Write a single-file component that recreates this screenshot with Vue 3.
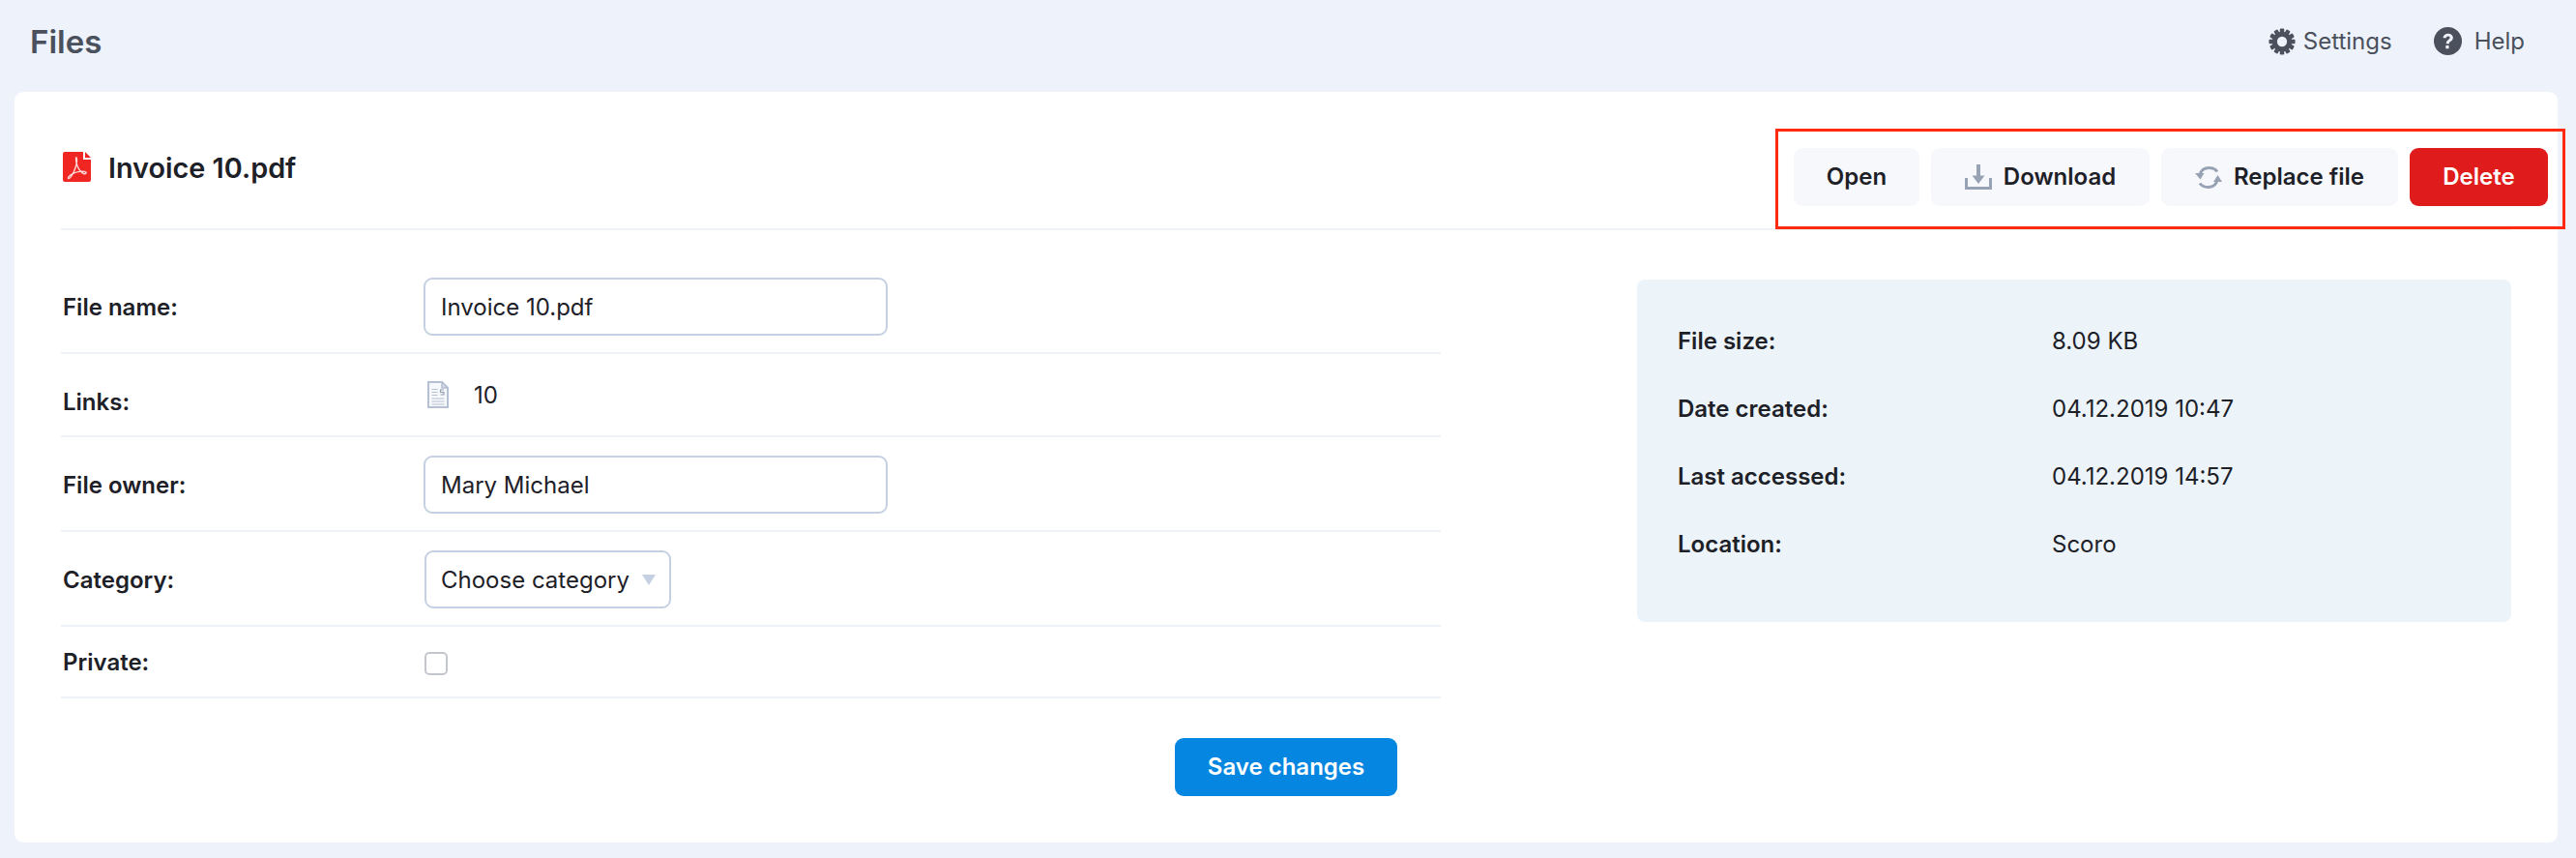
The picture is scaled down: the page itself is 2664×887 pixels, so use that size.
<script setup>
const details = [
  { label: 'File size:', value: '8.09 KB' },
  { label: 'Date created:', value: '04.12.2019 10:47' },
  { label: 'Last accessed:', value: '04.12.2019 14:57' },
  { label: 'Location:', value: 'Scoro' },
]
</script>

<template>
  <div class="page">
    <header class="topbar">
      <h1 class="page-title">Files</h1>
      <nav class="top-links">
        <a class="top-link settings">
          <svg width="28" height="28" viewBox="0 0 30 30"><g fill="#4a505c"><circle cx="15" cy="15" r="11"/><rect x="12.6" y="0.500" width="4.800" height="29" rx="1"/><rect x="12.6" y="0.500" width="4.800" height="29" rx="1" transform="rotate(30 15 15)"/><rect x="12.6" y="0.500" width="4.800" height="29" rx="1" transform="rotate(60 15 15)"/><rect x="12.6" y="0.500" width="4.800" height="29" rx="1" transform="rotate(90 15 15)"/><rect x="12.6" y="0.500" width="4.800" height="29" rx="1" transform="rotate(120 15 15)"/><rect x="12.6" y="0.500" width="4.800" height="29" rx="1" transform="rotate(150 15 15)"/></g><circle cx="15" cy="15" r="5.500" fill="#eef3fb"/></svg>
          Settings
        </a>
        <a class="top-link help">
          <svg width="29" height="29" viewBox="0 0 30 30"><circle cx="15" cy="15" r="15" fill="#4a505c"/><path d="M9.800 11.600c.3-3 2.500-4.700 5.400-4.700 3.100 0 5.300 1.700 5.300 4.400 0 2-1.100 3-2.500 4-1.200.8-1.600 1.300-1.600 2.600h-3.200c0-2.400.8-3.300 2.200-4.300 1.100-.8 1.800-1.300 1.800-2.200 0-1.100-.8-1.700-2-1.700-1.200 0-2 .8-2.100 2z" fill="#eef3fb"/><rect x="12.700" y="19.600" width="3.400" height="3.400" rx=".6" fill="#eef3fb"/></svg>
          Help
        </a>
      </nav>
    </header>

    <main class="card">
      <div class="card-head">
        <div class="file-title">
          <svg class="pdf" width="29" height="31" viewBox="0 0 29 31">
            <path d="M2 0h19v8h8v21a2 2 0 0 1-2 2H2a2 2 0 0 1-2-2V2a2 2 0 0 1 2-2z" fill="#f02622"/>
            <path d="M23 0l6 6h-6z" fill="#f02622"/>
            <path d="M14.500 6c-1.700.3-.8 5 .7 9 1.500 3.500 3.500 6.500 6.500 7.500 2.500.7 3.500-1.300 1-2-3.800-.8-10 .5-13.500 2.500-2.500 1.500-4.500 4-3.500 4.500 1.500.5 3.800-3.200 5.500-6.800 1.500-3.200 3.500-9 3.300-13-.1-1.500-.6-2-1.500-1.700z" fill="none" stroke="#fbd9d7" stroke-width="1.400"/>
          </svg>
          <span>Invoice 10.pdf</span>
        </div>
        <div class="actions">
          <button class="btn w-open">Open</button>
          <button class="btn w-download">
            <svg width="28" height="26" viewBox="0 0 28 26"><path d="M14 0v13" stroke="#98a2b5" stroke-width="4" fill="none"/><path d="M7.500 11.500h13L14 20z" fill="#98a2b5"/><path d="M1.500 14v10.500h25V14" stroke="#98a2b5" stroke-width="3" fill="none"/></svg>
            Download
          </button>
          <button class="btn w-replace">
            <svg width="28" height="23" viewBox="0 0 28 23"><path d="M23 5.500C21 2.700 18 1.500 14.500 1.500 9.500 1.500 6 4.500 5 9" fill="none" stroke="#98a2b5" stroke-width="3"/><path d="M0 7h9.500L5.500 13.500z" fill="#98a2b5"/><path d="M5 17.500c2 2.800 5 4 8.500 4 5 0 8.500-3 9.500-7.500" fill="none" stroke="#98a2b5" stroke-width="3"/><path d="M28 16h-9l4.500-7z" fill="#98a2b5"/></svg>
            Replace file
          </button>
          <button class="btn danger w-delete">Delete</button>
        </div>
      </div>

      <div class="content">
        <form class="form" @submit.prevent>
          <div class="row row-name">
            <label class="label">File name:</label>
            <input class="input" value="Invoice 10.pdf" />
          </div>
          <div class="row row-links">
            <label class="label label-low">Links:</label>
            <div class="links">
              <svg width="22" height="28" viewBox="0 0 22 28">
                <path d="M1 1h14l6 6v20H1z" fill="#f6f8fb" stroke="#b6c0d3" stroke-width="2"/>
                <path d="M15 1v6h6z" fill="#d5dbe7" stroke="#b6c0d3" stroke-width="1.500"/>
                <path d="M4.500 8.500h6M4.500 11.500h6M4.500 14.500h6M4.500 18h13M4.500 21h13M4.500 24h13" stroke="#b6c0d3" stroke-width="1.200"/>
                <path d="M17 9h-3.500v2.500H17V14h-3.500" stroke="#8f9bb0" stroke-width="1.100" fill="none"/>
              </svg>
              <span>10</span>
            </div>
          </div>
          <div class="row row-field">
            <label class="label">File owner:</label>
            <input class="input" value="Mary Michael" />
          </div>
          <div class="row row-field">
            <label class="label">Category:</label>
            <div class="select">
              <span>Choose category</span>
              <i class="caret"></i>
            </div>
          </div>
          <div class="row row-private">
            <label class="label">Private:</label>
            <span class="check"></span>
          </div>
          <div class="form-foot">
            <button class="btn primary" type="button">Save changes</button>
          </div>
        </form>

        <aside class="panel">
          <div v-for="d in details" :key="d.label" class="panel-row">
            <span class="label">{{ d.label }}</span>
            <span>{{ d.value }}</span>
          </div>
        </aside>
      </div>

      <div class="highlight"></div>
    </main>
  </div>
</template>

<style>
html, body { margin: 0; background: #eef3fb; }
</style>

<style scoped>
.page {
  width: 2664px;
  height: 887px;
  box-sizing: border-box;
  padding: 0 19px 16px 15px;
  font-family: Inter, "Liberation Sans", sans-serif;
  font-size: 24px;
  color: #1d2027;
  background: #eef3fb;
  display: flex;
  flex-direction: column;
}
.topbar {
  height: 95px;
  box-sizing: border-box;
  flex: none;
  display: flex;
  align-items: center;
  justify-content: space-between;
  padding: 0 34px 10px 16px;
  color: #4a505c;
}
.page-title { margin: 0; font-size: 33px; font-weight: 600; line-height: 40px; }
.top-links { display: flex; gap: 43px; }
.top-link { display: flex; align-items: center; gap: 8px; font-size: 24px; line-height: 30px; }
.help { gap: 13px; }
.card {
  position: relative;
  flex: 1;
  background: #fff;
  border-radius: 9px;
  padding: 0 10px 0 48px;
}
.card-head {
  height: 143px;
  box-sizing: border-box;
  margin-right: 38px;
  padding-left: 2px;
  border-bottom: 2px solid #eff3f8;
  display: flex;
  justify-content: space-between;
  align-items: flex-start;
}
.file-title {
  display: flex;
  align-items: center;
  gap: 18px;
  font-size: 28.8px;
  font-weight: 600;
  margin-top: 63px;
  line-height: 31px;
}
.pdf { margin-top: -2px; }
.actions {
  display: flex;
  gap: 12px;
  margin-top: 58px;
  margin-right: -38px;
}
.btn {
  height: 60px;
  border: 0;
  border-radius: 9px;
  padding: 0 0 2px;
  background: #f7f8fc;
  color: #1d2027;
  font: 600 24px Inter, "Liberation Sans", sans-serif;
  display: flex;
  align-items: center;
  justify-content: center;
  gap: 12px;
}
.w-open { width: 130px; }
.w-download { width: 226px; }
.w-replace { width: 245px; }
.w-delete { width: 143px; }
.danger { background: #e01b1b; color: #fff; }
.primary { background: #0586e0; color: #fff; width: 230px; }
.btn svg { margin-top: 2px; }
.highlight {
  position: absolute;
  left: 1821px;
  top: 38px;
  width: 817px;
  height: 104px;
  box-sizing: border-box;
  border: 3px solid #ff2a10;
  pointer-events: none;
}
.content {
  display: flex;
  justify-content: space-between;
  margin-right: 38px;
}
.form { width: 1427px; }
.label { font-weight: 600; }
.row .label { padding-left: 2px; }
.row .label-low { padding-top: 14px; }
.row {
  display: grid;
  grid-template-columns: 375px 1fr;
  align-items: center;
  border-bottom: 2px solid #eff3f8;
  box-sizing: border-box;
}
.row-name { height: 128px; padding-top: 32px; }
.row-links { height: 86px; }
.row-field { height: 98px; padding-top: 2px; }
.row-private { height: 74px; }
.links { display: flex; align-items: center; gap: 26px; margin-left: 4px; }
.input, .select {
  box-sizing: border-box;
  height: 60px;
  border: 2px solid #c5d0e3;
  border-radius: 9px;
  padding: 0 16px;
  background: #fff;
  color: #1d2027;
  font: 400 24px Inter, "Liberation Sans", sans-serif;
}
.input { width: 480px; outline: 0; }
.select {
  width: 255px;
  margin-left: 1px;
  display: flex;
  align-items: center;
  justify-content: space-between;
  padding: 0 14px 0 15px;
}
.caret {
  width: 0;
  height: 0;
  border-left: 7px solid transparent;
  border-right: 7px solid transparent;
  border-top: 11px solid #c5d0e3;
}
.check {
  width: 24px;
  height: 24px;
  box-sizing: border-box;
  border: 2px solid #c3c6cc;
  border-radius: 5px;
  margin: 4px 0 0 1px;
}
.form-foot {
  display: flex;
  justify-content: flex-end;
  padding: 41px 45px 0 0;
}
.panel {
  width: 904px;
  height: 354px;
  margin-top: 51px;
  box-sizing: border-box;
  background: #ecf4fa;
  border-radius: 8px;
  padding: 28px 42px;
}
.panel-row {
  display: grid;
  grid-template-columns: 387px 1fr;
  height: 70px;
  align-items: center;
}
</style>
